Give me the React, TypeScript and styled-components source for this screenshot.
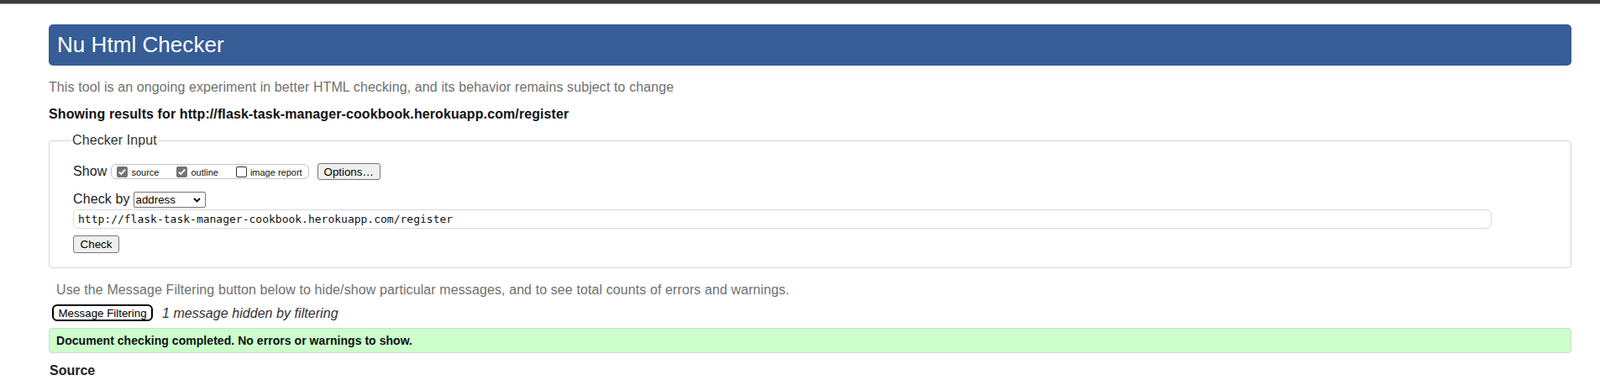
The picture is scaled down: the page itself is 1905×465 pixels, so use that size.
import React from "react";
import styled, { createGlobalStyle } from "styled-components";

const GlobalStyle = createGlobalStyle`
  html, body { margin: 0; padding: 0; background: #fff; }
  body { font-family: "Liberation Sans", Arial, sans-serif; color: #111; }
  * { box-sizing: border-box; }
`;

const TopBar = styled.div`
  height: 5px;
  background: #3b3b3b;
  border-bottom: 1px solid #9a9a9a;
`;

const Page = styled.main`
  padding: 0 34px 40px 58px;
`;

const Title = styled.h1`
  margin: 24px 0 0;
  height: 49px;
  line-height: 49px;
  padding: 0 10px;
  background: #365d96;
  color: #fff;
  font-size: 26px;
  font-weight: normal;
  letter-spacing: 0.05px;
  border-radius: 5px;
`;

const Intro = styled.p`
  margin: 16px 0 0;
  font-size: 16px;
  line-height: 20px;
  letter-spacing: 0.1px;
  color: #707070;
`;

const Results = styled.p`
  margin: 12px 0 0;
  font-size: 16px;
  line-height: 20px;
  letter-spacing: 0.1px;
  font-weight: bold;
  color: #111;
`;

const Fieldset = styled.fieldset`
  margin: 11px 0 0;
  padding: 17px 0 17px 28px;
  border: 1px solid #d4d4d4;
  border-radius: 4px;
  min-width: 0;
`;

const Legend = styled.legend`
  margin-left: -2px;
  padding: 0 1px;
  font-size: 16px;
  line-height: 20px;
  letter-spacing: 0.1px;
  color: #333;
`;

const Row = styled.div<{ $gapTop?: number }>`
  display: flex;
  align-items: center;
  height: 20px;
  margin-top: ${(p) => p.$gapTop ?? 0}px;
  font-size: 16px;
  line-height: 20px;
  letter-spacing: 0.1px;
  color: #222;
`;

const Pill = styled.span`
  display: inline-flex;
  align-items: center;
  gap: 21px;
  height: 18px;
  margin-left: 5px;
  padding: 0 7px 0 6px;
  border: 1px solid #c4c4c4;
  border-radius: 6px;
  letter-spacing: 0;
`;

const OptionLabel = styled.label`
  display: inline-flex;
  align-items: center;
  gap: 4px;
  font-size: 11px;
  line-height: 13px;
  color: #111;
`;

const OptionText = styled.span`
  padding-top: 2px;
`;

const Box = styled.span<{ $checked?: boolean }>`
  width: 13px;
  height: 13px;
  border-radius: 2px;
  display: inline-flex;
  align-items: center;
  justify-content: center;
  background: ${(p) => (p.$checked ? "#747474" : "#fff")};
  border: 1px solid ${(p) => (p.$checked ? "#747474" : "#333")};
`;

const Button = styled.button<{ $w: number; $h: number }>`
  width: ${(p) => p.$w}px;
  height: ${(p) => p.$h}px;
  padding: 0;
  font-family: "Liberation Sans", Arial, sans-serif;
  font-size: 13.33px;
  letter-spacing: 0;
  color: #000;
  background: #efefef;
  border: 1px solid #767676;
  border-radius: 3px;
`;

const OptionsButton = styled(Button)`
  margin-left: 10px;
`;

const CheckButton = styled(Button)`
  display: block;
  margin-top: 8px;
`;

const SelectBox = styled.span`
  display: inline-flex;
  align-items: center;
  align-self: flex-start;
  margin: 1px 0 0 4px;
  width: 86px;
  height: 19px;
  border: 1px solid #767676;
  border-radius: 2px;
  background: #fff;
`;

const Select = styled.select`
  appearance: none;
  flex: 1;
  min-width: 0;
  height: 100%;
  padding: 0 0 0 2px;
  border: none;
  background: transparent;
  font-family: "Liberation Sans", Arial, sans-serif;
  font-size: 13.33px;
  letter-spacing: 0;
  color: #000;
  outline: none;
`;

const Chevron = styled.svg`
  flex: none;
  margin-right: 5px;
`;

const UrlInput = styled.input`
  display: block;
  margin-top: 2px;
  width: calc(100% - 94px);
  height: 23px;
  padding: 0 5px;
  border: 1px solid #dadada;
  border-radius: 6px;
  font-family: "DejaVu Sans Mono", "Liberation Mono", monospace;
  font-size: 13px;
  color: #111;
`;

const FilterSection = styled.section`
  padding-left: 4px;
`;

const Notice = styled.p`
  margin: 16px 0 0;
  padding-left: 5px;
  font-size: 16px;
  line-height: 20px;
  letter-spacing: 0.1px;
  color: #707070;
`;

const FilterRow = styled.div`
  display: flex;
  align-items: center;
  height: 20px;
  margin-top: 7px;
`;

const FilterButton = styled.button`
  width: 120px;
  height: 20px;
  padding: 0;
  font-family: "Liberation Sans", Arial, sans-serif;
  font-size: 13.33px;
  color: #000;
  background: #fff;
  border: 2px solid #000;
  border-radius: 6px;
`;

const Hidden = styled.span`
  margin-left: 11px;
  font-size: 16px;
  font-style: italic;
  line-height: 17px;
  letter-spacing: 0.05px;
  color: #333;
`;

const Success = styled.div`
  margin-top: 8px;
  height: 30px;
  padding: 0 8px;
  border: 1px solid #d6d6d6;
  border-radius: 4px;
  background: #ccffcc;
  font-size: 14px;
  font-weight: bold;
  line-height: 28px;
  letter-spacing: 0.05px;
  color: #111;
`;

const SourceHeading = styled.h2`
  margin: 11px 0 0;
  padding-left: 1px;
  font-size: 16px;
  line-height: 20px;
  font-weight: bold;
  color: #222;
`;

const Check = ({ checked, label }: { checked?: boolean; label: string }) => (
  <OptionLabel>
    <Box $checked={checked}>
      {checked && (
        <svg width="11" height="11" viewBox="0 0 11 11">
          <path d="M1.8 5.6 L4.3 8 L9.2 2.6" fill="none" stroke="#fff" strokeWidth="1.9" />
        </svg>
      )}
    </Box>
    <OptionText>{label}</OptionText>
  </OptionLabel>
);

const url = "http://flask-task-manager-cookbook.herokuapp.com/register";

export default function App() {
  return (
    <>
      <GlobalStyle />
      <TopBar />
      <Page>
        <Title>Nu Html Checker</Title>
        <Intro>
          This tool is an ongoing experiment in better HTML checking, and its behavior remains subject to change
        </Intro>
        <Results>Showing results for {url}</Results>
        <Fieldset>
          <Legend>Checker Input</Legend>
          <Row>
            <span>Show</span>
            <Pill>
              <Check checked label="source" />
              <Check checked label="outline" />
              <Check label="image report" />
            </Pill>
            <OptionsButton $w={75} $h={20}>Options…</OptionsButton>
          </Row>
          <Row $gapTop={13}>
            <span>Check by</span>
            <SelectBox>
              <Select defaultValue="address">
                <option value="address">address</option>
                <option value="file">file upload</option>
                <option value="text">text input</option>
              </Select>
              <Chevron width="9" height="6" viewBox="0 0 9 6">
                <path d="M1 1 L4.5 4.5 L8 1" fill="none" stroke="#000" strokeWidth="1.8" />
              </Chevron>
            </SelectBox>
          </Row>
          <UrlInput type="url" defaultValue={url} />
          <CheckButton $w={55} $h={21}>Check</CheckButton>
        </Fieldset>
        <FilterSection>
          <Notice>
            Use the Message Filtering button below to hide/show particular messages, and to see total counts of errors and warnings.
          </Notice>
          <FilterRow>
            <FilterButton>Message Filtering</FilterButton>
            <Hidden>1 message hidden by filtering</Hidden>
          </FilterRow>
        </FilterSection>
        <Success>Document checking completed. No errors or warnings to show.</Success>
        <SourceHeading>Source</SourceHeading>
      </Page>
    </>
  );
}
